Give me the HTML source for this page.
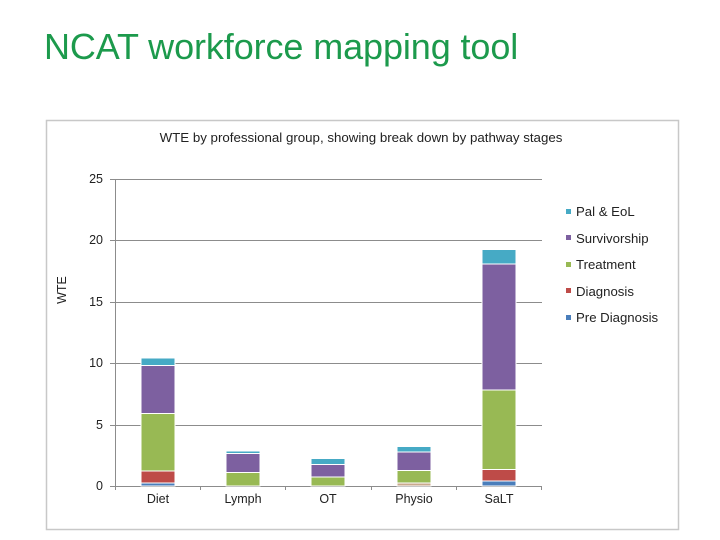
<!DOCTYPE html>
<html><head><style>
body{margin:0;width:720px;height:540px;background:#fff;overflow:hidden;font-family:"Liberation Sans",sans-serif;}
h1{position:absolute;left:44px;top:27px;margin:0;font-weight:normal;font-size:36px;line-height:40px;color:#1c9a4c;letter-spacing:-0.1px;}
svg{position:absolute;left:0;top:0;}
</style></head><body>
<h1>NCAT workforce mapping tool</h1>
<svg width="720" height="540" font-family="Liberation Sans, sans-serif">
<rect x="46.5" y="120.5" width="632" height="409" fill="#fff" stroke="#c8c8c8" stroke-width="1.5"/>
<text x="361" y="142" font-size="13.3" text-anchor="middle" fill="#222">WTE by professional group, showing break down by pathway stages</text>
<g stroke="#8c8c8c" stroke-width="1">
<line x1="110" y1="179.5" x2="542" y2="179.5"/>
<line x1="110" y1="240.5" x2="542" y2="240.5"/>
<line x1="110" y1="302.5" x2="542" y2="302.5"/>
<line x1="110" y1="363.5" x2="542" y2="363.5"/>
<line x1="110" y1="425.5" x2="542" y2="425.5"/>
<line x1="110" y1="486.5" x2="542" y2="486.5"/>
<line x1="115.5" y1="179" x2="115.5" y2="490"/>
<line x1="200.5" y1="486" x2="200.5" y2="490"/>
<line x1="285.5" y1="486" x2="285.5" y2="490"/>
<line x1="371.5" y1="486" x2="371.5" y2="490"/>
<line x1="456.5" y1="486" x2="456.5" y2="490"/>
<line x1="541.5" y1="486" x2="541.5" y2="490"/>
</g>
<g font-size="12.5" fill="#222" text-anchor="end">
<text x="103" y="183">25</text><text x="103" y="244">20</text><text x="103" y="306">15</text>
<text x="103" y="367">10</text><text x="103" y="429">5</text><text x="103" y="490">0</text>
</g>
<text transform="translate(66,290) rotate(-90)" font-size="12.5" text-anchor="middle" fill="#222">WTE</text>
<g font-size="12.5" fill="#222" text-anchor="middle">
<text x="158" y="503">Diet</text><text x="243" y="503">Lymph</text><text x="328" y="503">OT</text>
<text x="414" y="503">Physio</text><text x="499" y="503">SaLT</text>
</g>
<g stroke="#fff" stroke-width="1">
<rect x="141" y="483" width="34" height="3" fill="#4a7ebb"/>
<rect x="141" y="471" width="34" height="12" fill="#be4b48"/>
<rect x="141" y="413.5" width="34" height="57.5" fill="#98b954"/>
<rect x="141" y="365.5" width="34" height="48" fill="#7d60a0"/>
<rect x="141" y="358" width="34" height="7.5" fill="#46aac5"/>
<rect x="226" y="472.5" width="34" height="13.5" fill="#98b954"/>
<rect x="226" y="453.5" width="34" height="19" fill="#7d60a0"/>
<rect x="226" y="451" width="34" height="2.5" fill="#46aac5"/>
<rect x="311" y="477" width="34" height="9" fill="#98b954"/>
<rect x="311" y="464.5" width="34" height="12.5" fill="#7d60a0"/>
<rect x="311" y="458.5" width="34" height="6" fill="#46aac5"/>
<rect x="397" y="483" width="34" height="3" fill="#c9a98d"/>
<rect x="397" y="470.5" width="34" height="12.5" fill="#98b954"/>
<rect x="397" y="452" width="34" height="18.5" fill="#7d60a0"/>
<rect x="397" y="446.5" width="34" height="5.5" fill="#46aac5"/>
<rect x="482" y="481" width="34" height="5" fill="#4a7ebb"/>
<rect x="482" y="469.5" width="34" height="11.5" fill="#be4b48"/>
<rect x="482" y="390" width="34" height="79.5" fill="#98b954"/>
<rect x="482" y="264" width="34" height="126" fill="#7d60a0"/>
<rect x="482" y="249.5" width="34" height="14.5" fill="#46aac5"/>
</g>
<g font-size="13.2" fill="#222">
<rect x="566" y="209" width="5" height="5" fill="#46aac5"/><text x="576" y="216">Pal &amp; EoL</text>
<rect x="566" y="235" width="5" height="5" fill="#7d60a0"/><text x="576" y="243">Survivorship</text>
<rect x="566" y="262" width="5" height="5" fill="#98b954"/><text x="576" y="269">Treatment</text>
<rect x="566" y="288" width="5" height="5" fill="#be4b48"/><text x="576" y="296">Diagnosis</text>
<rect x="566" y="315" width="5" height="5" fill="#4a7ebb"/><text x="576" y="322">Pre Diagnosis</text>
</g>
</svg>
</body></html>
